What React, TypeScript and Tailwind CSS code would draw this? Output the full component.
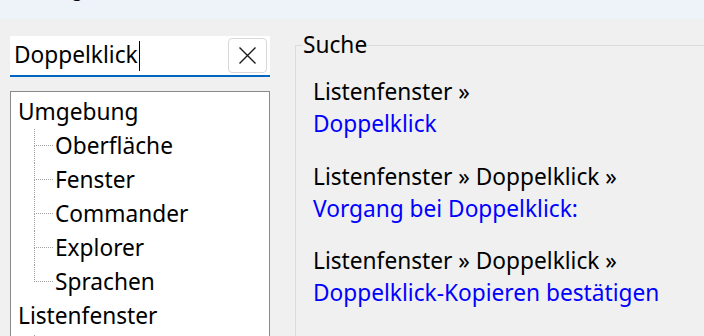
import React from "react";

const FONT = { fontFamily: '"Noto Sans", "Open Sans", sans-serif' };

function Child({ label, last }: { label: string; last?: boolean }) {
  return (
    <div className="flex h-[34px] items-center">
      <div className="w-[16px] shrink-0" />
      <div className="flex h-full w-[19px] shrink-0 flex-col">
        <div className="h-[17px] border-b border-l border-dotted border-[#a0a0a0]" />
        <div className={last ? "flex-1" : "flex-1 border-l border-dotted border-[#a0a0a0]"} />
      </div>
      <span className="ml-[2px] whitespace-nowrap">{label}</span>
    </div>
  );
}

export default function App() {
  return (
    <div className="h-[336px] w-[704px] overflow-hidden bg-[#f0f0f0] text-[22.7px] text-black" style={FONT}>
      <div className="h-[19px] overflow-hidden bg-[#eef3fa]">
        <div className="mt-[-20px] pl-[25px] text-[19px] leading-[19px]">Konfiguration</div>
      </div>
      <div className="flex">
        <div className="ml-[10px] mt-[17px] flex w-[260px] shrink-0 flex-col">
          <div className="flex h-[41px] items-center border-b-2 border-[#0067c0] bg-white pl-[4px] pr-[3px]">
            <span className="leading-none">Doppelklick</span>
            <span className="ml-[1px] h-[30px] w-px bg-black" />
            <div className="flex-1" />
            <button className="flex h-[35px] w-[39px] items-center justify-center rounded-[4px] border border-[#d8d8d8] bg-white">
              <svg width="19" height="19" viewBox="0 0 19 19">
                <path d="M1.5 1.5 L17.5 17.5 M17.5 1.5 L1.5 17.5" stroke="#1a1a1a" strokeWidth="1.4" fill="none" />
              </svg>
            </button>
          </div>
          <div className="mt-[14px] h-[260px] border border-[#8a8a8e] bg-white pl-[7px] pt-[3px]">
            <div className="flex h-[34px] items-center">Umgebung</div>
            <Child label="Oberfläche" />
            <Child label="Fenster" />
            <Child label="Commander" />
            <Child label="Explorer" />
            <Child label="Sprachen" last />
            <div className="flex h-[34px] items-center">Listenfenster</div>
            <div className="flex h-[20px]">
              <div className="w-[16px]" />
              <div className="mt-[2px] h-full border-l border-dotted border-[#a0a0a0]" />
            </div>
          </div>
        </div>
        <fieldset className="ml-[25px] mt-[12px] h-[400px] flex-1 border border-r-0 border-[#dcdcdc] pt-[17px]">
          <legend className="ml-[7px] leading-[28px]">Suche</legend>
          <div className="flex flex-col gap-[20.5px] pl-[17px] leading-[32px]">
            <div className="flex flex-col">
              <span>Listenfenster »</span>
              <span className="text-[#0000ff]">Doppelklick</span>
            </div>
            <div className="flex flex-col">
              <span>Listenfenster » Doppelklick »</span>
              <span className="text-[#0000ff]">Vorgang bei Doppelklick:</span>
            </div>
            <div className="flex flex-col">
              <span>Listenfenster » Doppelklick »</span>
              <span className="text-[#0000ff]">Doppelklick-Kopieren bestätigen</span>
            </div>
          </div>
        </fieldset>
      </div>
    </div>
  );
}
